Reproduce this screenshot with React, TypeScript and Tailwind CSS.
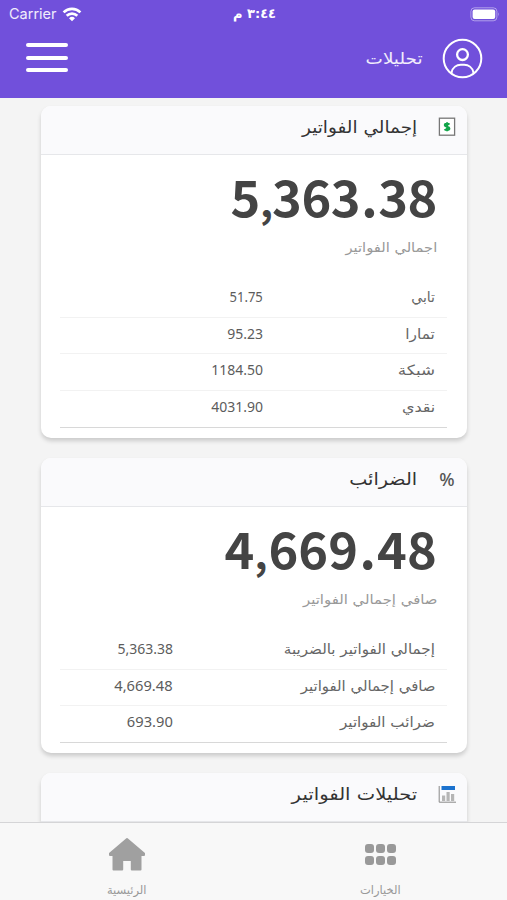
import type { ReactNode } from "react";

const arabic = "font-['DejaVu_Sans',sans-serif] whitespace-nowrap";
const latin = "font-['Noto_Sans',sans-serif] whitespace-nowrap";

type Row = { label: string; value: string; labelFit?: string; valueFit?: string };

function StatusBar() {
  return (
    <div dir="ltr" className="grid h-7 grid-cols-3 items-center pl-[9px] pr-[7px] text-white">
      <div className="flex items-center gap-[5px]">
        <span className="font-['Inter',sans-serif] text-[14.5px] leading-7 text-white/90">Carrier</span>
        <svg width="20" height="15" viewBox="0 0 20 15" fill="none" stroke="white" strokeWidth="2.7">
          <path d="M1.6 5.4a12 12 0 0 1 16.8 0" />
          <path d="M4.7 8.8a7.6 7.6 0 0 1 10.6 0" />
          <path d="M10 14.3 7 11.3a4.3 4.3 0 0 1 6 0Z" fill="white" stroke="none" />
        </svg>
      </div>
      <div dir="rtl" className={`${arabic} text-center text-[13px] font-bold leading-7`}>٣:٤٤ م</div>
      <div className="flex justify-end">
        <svg width="30" height="15" viewBox="0 0 30 15">
          <rect x="0.9" y="0.8" width="26" height="13" rx="3.6" fill="none" stroke="white" strokeOpacity="0.45" />
          <rect x="2.6" y="2.5" width="22.6" height="9.6" rx="2" fill="white" />
          <path d="M28.2 5.2q1.6 2.1 0 4.2Z" fill="white" fillOpacity="0.5" />
        </svg>
      </div>
    </div>
  );
}

function NavBar() {
  return (
    <div className="flex h-[70px] items-start justify-between pl-[26px] pr-[24px]">
      <div className="flex items-center gap-[19px] pt-[10px]">
        <svg width="41" height="41" viewBox="0 0 41 41" fill="none" stroke="white" strokeWidth="2">
          <circle cx="20.5" cy="20.5" r="18.8" />
          <circle cx="20.5" cy="16.6" r="5.4" strokeWidth="2.3" />
          <path d="M9.6 35.5v-1.2c1-4.8 5-7.6 9.2-7.6h3.4c4.2 0 8.2 2.8 9.2 7.6v1.2" />
        </svg>
        <span className={`${arabic} origin-right scale-x-[1.15] text-base leading-6 text-white/90`}>تحليلات</span>
      </div>
      <div className="flex w-[42px] flex-col gap-[8.5px] pt-[15px]">
        <span className="h-[4px] rounded-full bg-white" />
        <span className="h-[4px] rounded-full bg-white" />
        <span className="h-[4px] rounded-full bg-white" />
      </div>
    </div>
  );
}

function CardHeader({ icon, title, fit = "" }: { icon: ReactNode; title: string; fit?: string }) {
  return (
    <div className="flex h-[49px] items-start border-b border-[#e6e7ea] bg-[#fafafc] pr-[10px] pt-[9px]">
      <div className="flex h-6 w-5 items-center justify-center">{icon}</div>
      <h2 className={`${arabic} mr-[20px] origin-right text-[17px] leading-6 text-[#333] ${fit}`}>{title}</h2>
    </div>
  );
}

type BigNumberProps = { thousands: string; hundreds: string; decimals: string; comma: string; tracking: string };

function BigNumber({ thousands, hundreds, decimals, comma, tracking }: BigNumberProps) {
  return (
    <div
      dir="ltr"
      className={`whitespace-nowrap text-right font-['Noto_Sans_CJK_SC',sans-serif] text-[50.5px] font-bold leading-[60px] text-[#444] ${tracking}`}
    >
      {thousands}
      <span className={`text-[40px] leading-none ${comma}`}>,</span>
      {hundreds}
      <span className="mx-[1px]">.</span>
      {decimals}
    </div>
  );
}

function Total({ children, caption, fit }: { children: ReactNode; caption: string; fit: string }) {
  return (
    <div className="pb-[21px] pr-[30px] pt-[10px]">
      {children}
      <div className={`${arabic} mt-[11px] w-fit origin-right text-[13px] leading-6 text-[#999] ${fit}`}>{caption}</div>
    </div>
  );
}

function Rows({ rows, labelWidth }: { rows: Row[]; labelWidth: string }) {
  return (
    <div className="ml-[19px] mr-[20px]">
      {rows.map((row, i) => (
        <div
          key={row.label}
          className={`flex h-[36.7px] items-start border-b pr-[12px] pt-[4px] ${i === rows.length - 1 ? "border-[#d8d8d8]" : "border-[#f2f2f2]"}`}
        >
          <div className={labelWidth}>
            <div className={`${arabic} w-fit origin-right text-[14px] leading-6 text-[#666] ${row.labelFit ?? ""}`}>{row.label}</div>
          </div>
          <div dir="ltr" className={`${latin} text-[14px] leading-6 text-[#5c5c5c] ${row.valueFit ?? ""}`}>{row.value}</div>
        </div>
      ))}
    </div>
  );
}

function Card({ className = "", children }: { className?: string; children: ReactNode }) {
  return (
    <section className={`shrink-0 overflow-hidden rounded-[10px] bg-white shadow-[0_3px_4px_rgba(0,0,0,0.17)] ${className}`}>
      {children}
    </section>
  );
}

function MoneyIcon() {
  return (
    <svg width="18" height="20" viewBox="0 0 18 20">
      <rect x="1.4" y="1.2" width="15.2" height="17" fill="#fff" stroke="#777" strokeWidth="1.3" />
      <path d="M11.4 7.6C10.8 6.7 6.8 6.3 6.8 8.2s4.6 1.3 4.6 3.3-4 1.8-4.8.6M9.1 5.2v9" fill="none" stroke="#12a54a" strokeWidth="2" />
    </svg>
  );
}

function ChartIcon() {
  return (
    <svg width="18" height="19" viewBox="0 0 18 19">
      <path d="M1.2 1v16.2H18" fill="none" stroke="#888" strokeWidth="1" />
      <rect x="3.5" y="1" width="13.5" height="4" fill="#1b72ce" />
      <path d="M4 10.5h3.2V16H4zM8.5 7h3.2v9H8.5zM13 9h3.2v7H13z" fill="#b5b5b5" />
    </svg>
  );
}

function TabBar() {
  return (
    <nav dir="ltr" className="grid h-[78px] shrink-0 grid-cols-2 border-t border-[#d5d5d7] bg-[#f8f8f8] text-[#999]">
      <div className="flex flex-col items-center pt-[14px]">
        <svg width="38" height="36" viewBox="0 0 38 36" fill="#a0a0a0" stroke="#a0a0a0" strokeWidth="2" strokeLinejoin="round">
          <path d="M19 2 2 16.4V18h3.5v14.5h8.7V23h9.6v9.5h8.7V18H36v-1.6Z" />
        </svg>
        <span className={`${arabic} mt-[7px] text-[11.5px] leading-5`}>الرئيسية</span>
      </div>
      <div className="flex flex-col items-center pt-[21px]">
        <div className="grid grid-cols-3 gap-x-[2px] gap-y-[3px]">
          {[0, 1, 2, 3, 4, 5].map((n) => (
            <span key={n} className="size-[9px] rounded-[3px] bg-[#999]" />
          ))}
        </div>
        <span className={`${arabic} mt-[15px] text-[11.5px] leading-5`}>الخيارات</span>
      </div>
    </nav>
  );
}

const invoices: Row[] = [
  { label: "تابي", value: "51.75", valueFit: "origin-right scale-x-[0.93]" },
  { label: "تمارا", value: "95.23", labelFit: "scale-x-[1.1]" },
  { label: "شبكة", value: "1184.50", labelFit: "scale-x-[1.2]" },
  { label: "نقدي", value: "4031.90", labelFit: "scale-x-[1.14]" },
];

const taxes: Row[] = [
  { label: "إجمالي الفواتير بالضريبة", value: "5,363.38", labelFit: "scale-x-[1.08]" },
  { label: "صافي إجمالي الفواتير", value: "4,669.48", labelFit: "scale-x-[1.065]", valueFit: "origin-right scale-x-[1.05]" },
  { label: "ضرائب الفواتير", value: "693.90", labelFit: "scale-x-[1.08]", valueFit: "origin-right scale-x-[1.05]" },
];

export default function App() {
  return (
    <div dir="rtl" className="flex h-[900px] w-[507px] flex-col overflow-hidden bg-[#f4f4f4]">
      <header className="h-[98px] shrink-0 bg-[#7150db]">
        <StatusBar />
        <NavBar />
      </header>
      <main className="flex min-h-0 flex-1 flex-col gap-[20px] overflow-hidden pl-[41px] pr-[40px] pt-[8px]">
        <Card className="h-[332px]">
          <CardHeader icon={<MoneyIcon />} title="إجمالي الفواتير" fit="scale-x-[1.085]" />
          <Total caption="اجمالي الفواتير" fit="scale-x-[1.13]">
            <BigNumber thousands="5" hundreds="363" decimals="38" comma="tracking-[-1px]" tracking="tracking-[-0.4px]" />
          </Total>
          <Rows rows={invoices} labelWidth="w-[172px]" />
        </Card>
        <Card className="h-[295px]">
          <CardHeader
            icon={<span className={`${latin} text-[18px] font-medium text-[#555]`}>%</span>}
            title="الضرائب"
            fit="scale-x-[1.13]"
          />
          <Total caption="صافي إجمالي الفواتير" fit="scale-x-[1.145]">
            <BigNumber thousands="4" hundreds="669" decimals="48" comma="tracking-[1px]" tracking="tracking-[0.2px]" />
          </Total>
          <Rows rows={taxes} labelWidth="w-[262px]" />
        </Card>
        <Card className="h-[200px]">
          <CardHeader icon={<ChartIcon />} title="تحليلات الفواتير" fit="scale-x-[1.15]" />
        </Card>
      </main>
      <TabBar />
    </div>
  );
}
